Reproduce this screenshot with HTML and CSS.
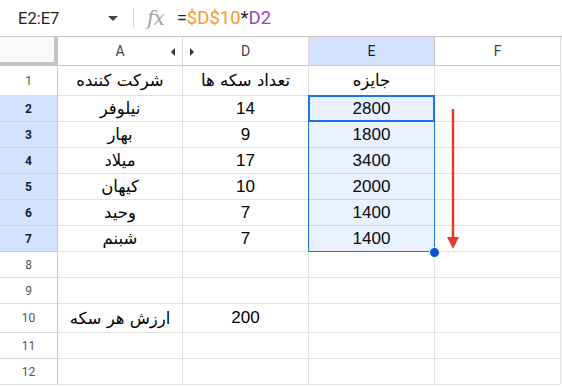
FILE: index.html
```html
<!doctype html>
<html lang="fa">
<head>
    <meta charset="UTF-8">
    <title>Sheet</title>
    <link rel="stylesheet" href="styles.css">
</head>
<body>
<div class="formulaBar">
    <div class="nameBox">
        <span class="rangeName">E2:E7</span>
        <span class="caret"></span>
    </div>
    <span class="sep"></span>
    <span class="fx">fx</span>
    <span class="formula">=<span class="refA">$D$10</span>*<span class="refB">D2</span></span>
</div>

<div class="sheet">
    <div class="grid">
        <div class="corner"></div>
        <div class="colHead">A<span class="hideL"></span></div>
        <div class="colHead"><span class="hideR"></span>D</div>
        <div class="colHead sel">E</div>
        <div class="colHead">F</div>

        <div class="rowHead">1</div>
        <div class="cell fa">شرکت کننده</div>
        <div class="cell fa">تعداد سکه ها</div>
        <div class="cell fa">جایزه</div>
        <div class="cell"></div>

        <div class="rowHead sel">2</div>
        <div class="cell fa">نیلوفر</div>
        <div class="cell">14</div>
        <div class="cell">2800</div>
        <div class="cell"></div>

        <div class="rowHead sel">3</div>
        <div class="cell fa">بهار</div>
        <div class="cell">9</div>
        <div class="cell">1800</div>
        <div class="cell"></div>

        <div class="rowHead sel">4</div>
        <div class="cell fa">میلاد</div>
        <div class="cell">17</div>
        <div class="cell">3400</div>
        <div class="cell"></div>

        <div class="rowHead sel">5</div>
        <div class="cell fa">کیهان</div>
        <div class="cell">10</div>
        <div class="cell">2000</div>
        <div class="cell"></div>

        <div class="rowHead sel">6</div>
        <div class="cell fa">وحید</div>
        <div class="cell">7</div>
        <div class="cell">1400</div>
        <div class="cell"></div>

        <div class="rowHead sel">7</div>
        <div class="cell fa">شبنم</div>
        <div class="cell">7</div>
        <div class="cell">1400</div>
        <div class="cell"></div>

        <div class="rowHead">8</div>
        <div class="cell"></div>
        <div class="cell"></div>
        <div class="cell"></div>
        <div class="cell"></div>

        <div class="rowHead">9</div>
        <div class="cell"></div>
        <div class="cell"></div>
        <div class="cell"></div>
        <div class="cell"></div>

        <div class="rowHead">10</div>
        <div class="cell fa">ارزش هر سکه</div>
        <div class="cell">200</div>
        <div class="cell"></div>
        <div class="cell"></div>

        <div class="rowHead">11</div>
        <div class="cell"></div>
        <div class="cell"></div>
        <div class="cell"></div>
        <div class="cell"></div>

        <div class="rowHead">12</div>
        <div class="cell"></div>
        <div class="cell"></div>
        <div class="cell"></div>
        <div class="cell"></div>
    </div>

    <!-- selection E2:E7 -->
    <div class="selection"></div>
    <div class="activeCell"></div>
    <div class="fillHandle"></div>

    <svg class="arrow" width="16" height="142" viewBox="0 0 16 142">
        <line x1="8" y1="0" x2="8" y2="130" stroke="#e53935" stroke-width="2.5"/>
        <polygon points="2,128 14,128 8,140" fill="#e53935"/>
    </svg>
</div>
</body>
</html>
```

FILE: styles.css
```css
* {
    padding: 0;
    margin: 0;
    box-sizing: border-box;
}

body {
    width: 562px;
    height: 387px;
    overflow: hidden;
    background: #fff;
    font-family: "Liberation Sans", "DejaVu Sans", sans-serif;
    color: #000;
}

.formulaBar {
    display: flex;
    align-items: center;
    height: 37px;
    border-bottom: 1px solid #c7c7c7;
    font-family: Roboto, "Liberation Sans", sans-serif;
}

.nameBox {
    display: flex;
    align-items: center;
    justify-content: space-between;
    width: 133px;
    padding: 0 15px 0 18px;
}

.rangeName {
    font-size: 16.5px;
    color: #1f1f1f;
}

.caret {
    width: 0;
    height: 0;
    border-left: 5px solid transparent;
    border-right: 5px solid transparent;
    border-top: 5px solid #444;
}

.sep {
    width: 1px;
    height: 20px;
    background: #dadce0;
}

.fx {
    margin-left: 13px;
    font-family: "DejaVu Serif", "Liberation Serif", serif;
    font-style: italic;
    font-size: 20px;
    color: #a3a3a3;
    letter-spacing: -1px;
}

.formula {
    margin-left: 13px;
    font-size: 18.5px;
    color: #1f1f1f;
}

.refA {
    color: #f29d2a;
}

.refB {
    color: #9b40c8;
}

.sheet {
    position: relative;
    height: 350px;
    overflow: hidden;
}

.grid {
    display: grid;
    grid-template-columns: 58px 125px 126px 126px 126px;
    grid-template-rows: 29px 30px repeat(8, 26px) 29px 26px 26px 26px;
}

.corner {
    background: #f8f9fa;
    border-right: 4px solid #c4c4c4;
    border-bottom: 4px solid #c4c4c4;
}

.colHead {
    position: relative;
    display: flex;
    align-items: center;
    justify-content: center;
    font-family: Roboto, "Liberation Sans", sans-serif;
    font-size: 14px;
    color: #444;
    border-right: 1px solid #d9d9d9;
    border-bottom: 1px solid #c7c7c7;
}

.colHead.sel {
    background: #d3e3fd;
    color: #0b1f44;
    border-right-color: #c4c7c5;
}

.hideL {
    position: absolute;
    right: 7px;
    top: 11px;
    border-top: 4px solid transparent;
    border-bottom: 4px solid transparent;
    border-right: 4px solid #333;
}

.hideR {
    position: absolute;
    left: 7px;
    top: 11px;
    border-top: 4px solid transparent;
    border-bottom: 4px solid transparent;
    border-left: 4px solid #333;
}

.rowHead {
    display: flex;
    align-items: center;
    justify-content: center;
    font-family: Roboto, "Liberation Sans", sans-serif;
    font-size: 12px;
    color: #555;
    border-right: 1px solid #c7c7c7;
    border-bottom: 1px solid #dcdcdc;
}

.rowHead.sel {
    background: #d3e3fd;
    color: #0b1f44;
    font-weight: bold;
    border-bottom-color: #c4d3ec;
}

.cell {
    display: flex;
    align-items: center;
    justify-content: center;
    font-size: 17px;
    border-right: 1px solid #e1e1e1;
    border-bottom: 1px solid #e1e1e1;
}

.cell.fa {
    font-family: "DejaVu Sans", sans-serif;
    font-size: 16.5px;
}

.selection {
    position: absolute;
    left: 308px;
    top: 58px;
    width: 127px;
    height: 157px;
    border: 1px solid #1a73e8;
    background: rgba(26, 115, 232, 0.1);
}

.activeCell {
    position: absolute;
    left: 308px;
    top: 58px;
    width: 127px;
    height: 27px;
    border: 2px solid #1a73e8;
}

.fillHandle {
    position: absolute;
    left: 429px;
    top: 210px;
    width: 11px;
    height: 11px;
    border-radius: 50%;
    background: #0b57d0;
    border: 1px solid #fff;
}

.arrow {
    position: absolute;
    left: 445px;
    top: 72px;
}
```
